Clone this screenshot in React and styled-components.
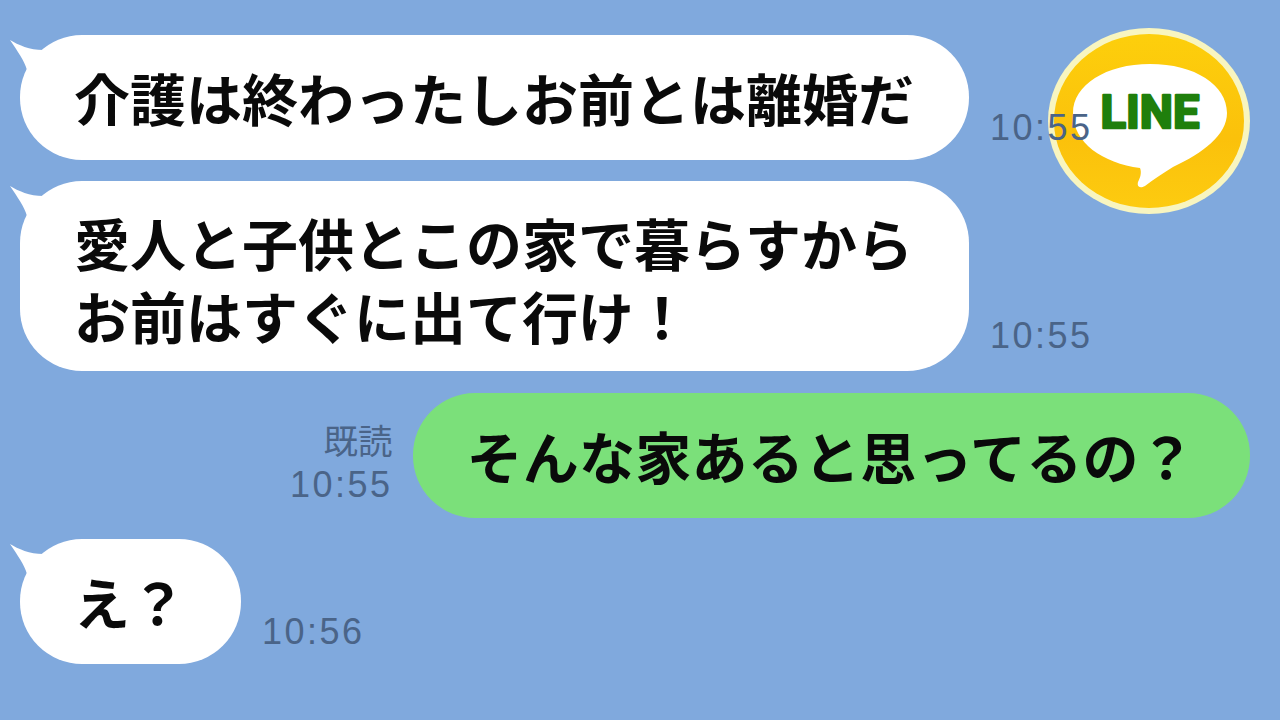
import React from 'react'
import styled, { createGlobalStyle } from 'styled-components'

const GlobalStyle = createGlobalStyle`
  html, body {
    margin: 0;
    padding: 0;
  }
  body {
    background: #80a9dd;
    font-family: "Noto Sans CJK JP", "Noto Sans", sans-serif;
  }
`

function App() {
  return (
    <>
      <GlobalStyle />
      <Chat>
        <LineLogo />
        <Message text="介護は終わったしお前とは離婚だ" time="10:55" />
        <Message text={'愛人と子供とこの家で暮らすから\nお前はすぐに出て行け！'} time="10:55" />
        <SentRow>
          <Meta>
            <Read>既読</Read>
            <SentTime>10:55</SentTime>
          </Meta>
          <Bubble $sent>
            <span>そんな家あると思ってるの？</span>
          </Bubble>
        </SentRow>
        <Message text="え？" time="10:56" />
      </Chat>
    </>
  )
}

function Message({ text, time }) {
  const multi = text.includes('\n')
  return (
    <ReceivedRow>
      <Bubble $multi={multi}>
        <Tail viewBox="0 0 60 60">
          <path d="M0 0 C8 5 20 10 33 10 L60 10 L60 60 L20 60 L17 30 C14 20 8 12 0 0 Z" fill="#fff" />
        </Tail>
        <span>{text}</span>
      </Bubble>
      <Time $multi={multi}>{time}</Time>
    </ReceivedRow>
  )
}

function LineLogo() {
  return (
    <Logo viewBox="0 0 204 188">
      <defs>
        <linearGradient id="gold" x1="0" y1="0" x2="0" y2="1">
          <stop offset="0" stopColor="#fdcf0c" />
          <stop offset="0.6" stopColor="#fbc10b" />
          <stop offset="1" stopColor="#fdcb10" />
        </linearGradient>
      </defs>
      <ellipse cx="101" cy="93" rx="101" ry="93" fill="#f8f5c0" />
      <ellipse cx="101" cy="93" rx="95" ry="87" fill="url(#gold)" />
      <path
        d="M102 36 C147 36 179 57 179 85 C179 107 155 125 125 139 C115 145 105 152 97 158 C91 161 89 158 90 154 C92 150 94 145 92 140 C55 135 25 115 25 85 C25 57 58 36 102 36 Z"
        fill="#fff"
      />
      <LogoText x="102" y="100" textAnchor="middle">LINE</LogoText>
    </Logo>
  )
}

const Chat = styled.main`
  position: relative;
  box-sizing: border-box;
  width: 1280px;
  height: 720px;
  overflow: hidden;
  padding: 35px 30px 0 20px;
  display: flex;
  flex-direction: column;
  gap: 21px;
`
const ReceivedRow = styled.div`
  display: flex;
  align-items: flex-end;
  gap: 21px;
`
const SentRow = styled.div`
  display: flex;
  align-items: flex-end;
  justify-content: flex-end;
  gap: 20px;
  margin-top: 1px;
`
const Bubble = styled.div`
  position: relative;
  box-sizing: border-box;
  min-height: 125px;
  display: flex;
  align-items: center;
  padding: ${(p) => (p.$multi ? '24px 56px 20px 54px' : '20px 55px 22px 54px')};
  border-radius: 62px;
  background: ${(p) => (p.$sent ? '#7be07a' : '#fff')};
  color: #0a0a0a;
  font-size: 56px;
  font-weight: 700;
  line-height: 73px;
  letter-spacing: ${(p) => (p.$sent ? '0.25px' : '0')};
  white-space: pre;
  span {
    position: relative;
  }
`
const Tail = styled.svg`
  position: absolute;
  left: -10px;
  top: 5px;
  width: 60px;
  height: 60px;
`
const Meta = styled.div`
  display: flex;
  flex-direction: column;
  align-items: flex-end;
`
const Read = styled.span`
  color: #4a6488;
  font-size: 34.5px;
  line-height: 42px;
  margin-bottom: 5px;
`
const Time = styled.span`
  position: relative;
  z-index: 1;
  color: #4a6488;
  font-family: "Liberation Sans", sans-serif;
  font-size: 36px;
  line-height: 40px;
  letter-spacing: 2.5px;
  margin-bottom: ${(p) => (p.$multi ? '15px' : '12px')};
`
const SentTime = styled(Time)`
  margin-bottom: 13px;
`
const Logo = styled.svg`
  position: absolute;
  left: 1048px;
  top: 28px;
  width: 204px;
  height: 188px;
`
const LogoText = styled.text`
  fill: #1f7f0c;
  stroke: #1f7f0c;
  stroke-width: 2.5px;
  stroke-linejoin: round;
  font-family: Roboto, sans-serif;
  font-size: 47px;
  font-weight: 700;
`

export default App
